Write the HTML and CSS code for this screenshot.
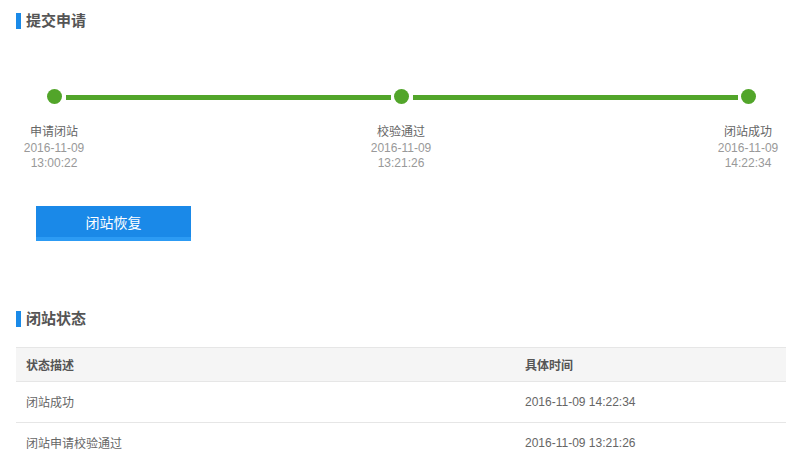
FILE: index.html
```html
<!DOCTYPE html>
<html lang="zh-CN">
<head>
    <meta charset="UTF-8">
    <title>闭站申请</title>
    <link rel="stylesheet" href="styles.css">
</head>
<body>
    <div class="page">
        <h3 class="section-title">提交申请</h3>

        <div class="progress">
            <div class="track">
                <span class="dot"></span>
                <span class="line"></span>
                <span class="dot"></span>
                <span class="line"></span>
                <span class="dot"></span>
            </div>
            <div class="steps">
                <div class="step">
                    <p class="step-name">申请闭站</p>
                    <p class="step-time">2016-11-09<br>13:00:22</p>
                </div>
                <div class="step">
                    <p class="step-name">校验通过</p>
                    <p class="step-time">2016-11-09<br>13:21:26</p>
                </div>
                <div class="step">
                    <p class="step-name">闭站成功</p>
                    <p class="step-time">2016-11-09<br>14:22:34</p>
                </div>
            </div>
        </div>

        <button type="button" class="btn-restore">闭站恢复</button>

        <h3 class="section-title second">闭站状态</h3>

        <table class="status-table">
            <thead>
                <tr><th class="col-desc">状态描述</th><th>具体时间</th></tr>
            </thead>
            <tbody>
                <tr><td>闭站成功</td><td>2016-11-09 14:22:34</td></tr>
                <tr><td>闭站申请校验通过</td><td>2016-11-09 13:21:26</td></tr>
            </tbody>
        </table>
    </div>
</body>
</html>
```

FILE: styles.css
```css
body { margin: 0; font-family: "Liberation Sans", Arial, "Noto Sans CJK SC", sans-serif; color: #666; background: #fff; }
.page { padding: 0 18px 0 16px; }

.section-title { margin: 0; padding-top: 13px; height: 16px; line-height: 16px; font-size: 15px; font-weight: bold; color: #555; display: flex; align-items: center; }
.section-title::before { content: ""; width: 5px; height: 16px; background: #1a8ae8; margin-right: 5px; }
.section-title.second { padding-top: 70px; }

.progress { padding-top: 60px; }
.track { display: flex; align-items: center; margin: 0 30px 0 31px; }
.dot { width: 15px; height: 15px; border-radius: 50%; background: #52a52a; flex: none; }
.line { flex: 1; height: 5px; background: #52a52a; margin: 2px 3px 0 4px; }

.steps { display: flex; justify-content: space-between; margin-top: 21px; }
.step { width: 76px; text-align: center; font-size: 12px; line-height: 15.5px; }
.step p { margin: 0; }
.step-name { color: #666; }
.step-time { color: #999; }

.btn-restore { display: block; margin: 34px 0 0 20px; width: 155px; height: 35px; padding: 2px 0 0; border: none; border-bottom: 4px solid #2c9bf4; background: #1a89e8; color: #fff; font-size: 14px; font-family: inherit; cursor: pointer; }

.status-table { width: 770px; margin-top: 20px; border-collapse: collapse; font-size: 12px; }
.status-table th { background: #f5f5f5; color: #555; font-weight: bold; text-align: left; height: 33px; padding: 0 10px; border-top: 1px solid #e6e6e6; border-bottom: 1px solid #e6e6e6; }
.status-table .col-desc { width: 479px; }
.status-table td { height: 40px; padding: 0 10px; border-bottom: 1px solid #e6e6e6; color: #666; }
```
